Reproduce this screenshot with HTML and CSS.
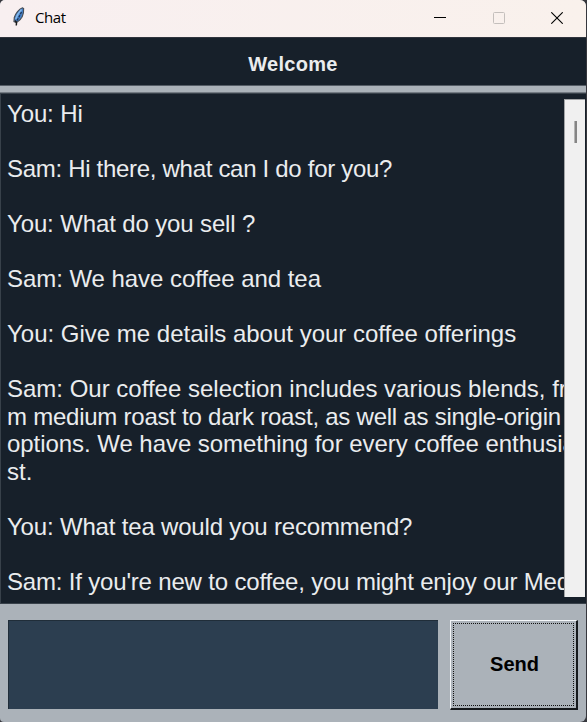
FILE: index.html
```
<!DOCTYPE html>
<html lang="en">
<head>
<meta charset="utf-8">
<title>Chat</title>
<link rel="stylesheet" href="styles.css">
</head>
<body>
<div class="window">
  <header class="titlebar">
    <svg class="feather" width="14" height="20" viewBox="0 0 14 20">
      <path d="M10.500.8C7 2 3.500 6.500 2.300 10.500L2 14.500 4.500 15.500C9 13 12 8 11.600 1.500Z" fill="#4583cd" stroke="#4a4f57" stroke-width="1.200"/>
      <path d="M9.500 2.500C7.500 4.500 5 8 3.700 12" stroke="#86b9ea" stroke-width="1.500" fill="none"/>
      <path d="M9.500 5 7.500 9 5 13.500" stroke="#1f3352" stroke-width="1.300" stroke-dasharray="2.500 1" fill="none"/>
      <path d="M3.200 13.500 4.500 15.500 4.300 18.500" stroke="#1d1d1d" stroke-width="1.500" fill="none"/>
    </svg>
    <span class="title">Chat</span>
    <div class="controls">
      <svg width="12" height="12" viewBox="0 0 12 12"><path d="M0 5.500H12" stroke="#000"/></svg>
      <svg width="12" height="12" viewBox="0 0 12 12"><rect x=".5" y=".5" width="11" height="11" rx="1" fill="none" stroke="#c4bfbc"/></svg>
      <svg width="12" height="12" viewBox="0 0 12 12"><path d="M.3.300 11.700 11.700M11.700.300.300 11.700" stroke="#000" stroke-width="1.100"/></svg>
    </div>
  </header>
  <h1 class="welcome">Welcome</h1>
  <div class="divider"></div>
  <main class="chat">
    <div class="log">
      <p class="snug">You: Hi</p>
      <p class="tightest">Sam: Hi there, what can I do for you?</p>
      <p class="snug">You: What do you sell ?</p>
      <p class="close">Sam: We have coffee and tea</p>
      <p>You: Give me details about your coffee offerings</p>
      <p>Sam: Our coffee selection includes various blends, fro<br><span class="tighter">m medium roast to dark roast, as well as single-origin</span><br><span class="close">options. We have something for every coffee enthusia</span><br>st.</p>
      <p class="tight">You: What tea would you recommend?</p>
      <p class="tight">Sam: If you're new to coffee, you might enjoy our Med</p>
    </div>
    <div class="scrollbar"><div class="thumb"></div></div>
  </main>
  <footer class="composer">
    <div class="entry"></div>
    <button class="send"><span>Send</span></button>
  </footer>
</div>
</body>
</html>
```
FILE: styles.css
```
* { box-sizing: border-box; }
body {
  margin: 0;
  background: #36373d;
  font-family: "Liberation Sans", Arial, sans-serif;
}
.window {
  width: 586px;
  height: 722px;
  display: flex;
  flex-direction: column;
  overflow: hidden;
  border-radius: 5px 6px 6px 4px;
  background: #abb2b9;
}
.titlebar {
  height: 37px;
  display: flex;
  align-items: center;
  padding: 0 23px 2px 12px;
  background: linear-gradient(90deg, #f8eff0, #f9f1ec);
}
.feather { display: block; margin-top: -2px; }
.title {
  margin: -2px 0 0 9px;
  font: 15px "Open Sans", sans-serif;
  letter-spacing: -0.4px;
  color: #000;
}
.controls {
  margin-left: auto;
  display: flex;
  gap: 46.5px;
}
.controls svg { display: block; }
.welcome {
  height: 48px;
  margin: 0;
  border-top: 1px solid #30343d;
  background: #17202a;
  color: #eaecee;
  text-align: center;
  font-size: 20px;
  letter-spacing: 0.3px;
  line-height: 52px;
}
.divider {
  height: 8px;
  border-top: 1px solid #555d66;
  border-bottom: 1px solid #747b83;
  background: #abb2b9;
}
.chat {
  height: 511px;
  display: flex;
  padding: 5px 1px 6px 6px;
  border: 1px solid #38414a;
  border-width: 1px 0 1px 1px;
  background: #17202a;
}
.log {
  width: 557px;
  padding-top: 1px;
  overflow: hidden;
  white-space: nowrap;
  font-size: 24px;
  line-height: 27.53px;
  color: #eaecee;
}
.log p { margin: 0 0 27.53px; }
.close { letter-spacing: -0.05px; }
.snug { letter-spacing: -0.13px; }
.tight { letter-spacing: -0.18px; }
.tighter { letter-spacing: -0.24px; }
.tightest { letter-spacing: -0.3px; }
.scrollbar {
  flex: 1;
  padding: 21px 0 0 9px;
  background: #f0f0f0;
  border-top: 1px solid #a2a4a6;
  border-left: 1px solid #a2a4a6;
}
.thumb {
  width: 3px;
  height: 22px;
  background: #858585;
  border-left: 1px solid #b4b4b4;
}
.composer {
  flex: 1;
  display: flex;
  gap: 12px;
  padding: 16px 8px 12px;
}
.entry {
  width: 430px;
  height: 89px;
  background: #2c3e50;
  border-top: 1px solid #202d39;
  border-left: 1px solid #202d39;
}
.send {
  flex: 1;
  height: 90px;
  padding: 2px;
  background: #abb2b9;
  border: solid;
  border-width: 1px 2px 2px 1px;
  border-color: #f4f7fa #15181b #15181b #f4f7fa;
  font: bold 20px "Liberation Sans", Arial, sans-serif;
  color: #000;
}
.send span {
  height: 100%;
  display: flex;
  align-items: center;
  justify-content: center;
  padding-left: 2px;
  border: 1px dotted #111;
}
```
